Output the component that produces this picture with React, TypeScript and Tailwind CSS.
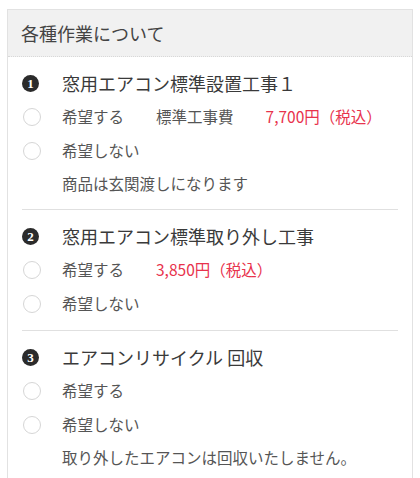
import React from 'react'

type Option = { label: string; extra?: React.ReactNode }
type Work = { no: string; title: string; options: Option[]; note?: string }

const price = (text: string) => <span className="ml-8 text-[#e8324c]">{text}</span>

const works: Work[] = [
  {
    no: '1',
    title: '窓用エアコン標準設置工事１',
    options: [
      {
        label: '希望する',
        extra: (
          <>
            <span className="ml-8">標準工事費</span>
            {price('7,700円（税込）')}
          </>
        ),
      },
      { label: '希望しない' },
    ],
    note: '商品は玄関渡しになります',
  },
  {
    no: '2',
    title: '窓用エアコン標準取り外し工事',
    options: [{ label: '希望する', extra: price('3,850円（税込）') }, { label: '希望しない' }],
  },
  {
    no: '3',
    title: 'エアコンリサイクル 回収',
    options: [{ label: '希望する' }, { label: '希望しない' }],
    note: '取り外したエアコンは回収いたしません。',
  },
]

export default function App() {
  return (
    <div
      className="h-screen overflow-hidden bg-white pt-[9px] pl-[7px]"
      style={{ fontFamily: '"Noto Sans CJK JP", "Noto Sans", sans-serif' }}
    >
      <div className="w-[406px] min-h-[520px] border border-[#e2e2e2]">
        {/* header */}
        <div className="h-[47px] flex items-center px-[13px] bg-[#f1f1f1] border-b border-dotted border-[#d8d8d8] text-[18px] text-[#444]">
          各種作業について
        </div>

        {/* work list */}
        <div className="px-[14px]">
          {works.map((w, i) => (
            <div key={w.no} className={`pt-[10px] pb-[9px] ${i > 0 ? 'border-t border-[#e0e0e0]' : ''}`}>
              <div className="h-[33px] flex items-center">
                <div className="w-[40px] flex">
                  <span
                    className="w-[17px] h-[17px] rounded-full bg-[#2b2b2b] text-white text-[13px] font-bold flex items-center justify-center leading-none"
                    style={{ fontFamily: '"Liberation Serif", serif' }}
                  >
                    {w.no}
                  </span>
                </div>
                <span className="text-[18px] text-[#3a3a3a]">{w.title}</span>
              </div>
              {w.options.map(o => (
                <label key={o.label} className="h-[34px] flex items-center text-[15.5px] text-[#555]">
                  <span className="w-[40px] flex">
                    <span className="ml-[1px] w-[18px] h-[18px] rounded-full border-[1.5px] border-[#d6d6d6] bg-white" />
                  </span>
                  <span>{o.label}</span>
                  {o.extra}
                </label>
              ))}
              {w.note && (
                <div className="h-[32px] flex items-center pl-[40px] text-[15.5px] text-[#555]">{w.note}</div>
              )}
            </div>
          ))}
        </div>
      </div>
    </div>
  )
}
